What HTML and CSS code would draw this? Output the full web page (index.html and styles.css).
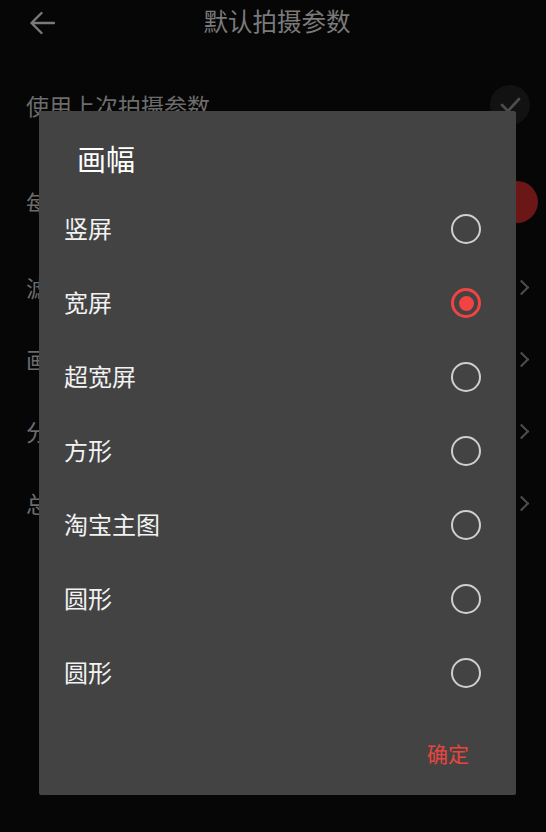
FILE: index.html
```html
<!DOCTYPE html>
<html lang="zh">
<head>
<meta charset="utf-8">
<title>默认拍摄参数</title>
<link rel="stylesheet" href="styles.css">
</head>
<body>
<div class="page">
  <header class="topbar">
    <svg class="back" width="26" height="24" viewBox="0 0 26 24"><path d="M25 12H2.5M12.5 2L2.5 12L12.5 22" fill="none" stroke="#7a7a7a" stroke-width="2.4" stroke-linecap="round" stroke-linejoin="round"/></svg>
    <h1 class="title">默认拍摄参数</h1>
  </header>
  <div class="settings">
    <div class="row r1"><span>使用上次拍摄参数</span>
      <span class="knob dark"><svg width="40" height="40" viewBox="0 0 40 40"><path d="M12 20l6 6 11-12" fill="none" stroke="#4c4c4c" stroke-width="2.6" stroke-linecap="round" stroke-linejoin="round"/></svg></span></div>
    <div class="row r2"><span>每</span><span class="knob red"></span></div>
    <div class="row r3"><span>滤</span><span class="chev"></span></div>
    <div class="row"><span>画</span><span class="chev"></span></div>
    <div class="row"><span>分</span><span class="chev"></span></div>
    <div class="row"><span>总</span><span class="chev"></span></div>
  </div>
</div>

<div class="dialog">
  <h2 class="dlg-title">画幅</h2>
  <ul class="options">
    <li class="option"><span class="label">竖屏</span><span class="radio"></span></li>
    <li class="option"><span class="label">宽屏</span><span class="radio on"></span></li>
    <li class="option"><span class="label">超宽屏</span><span class="radio"></span></li>
    <li class="option"><span class="label">方形</span><span class="radio"></span></li>
    <li class="option"><span class="label">淘宝主图</span><span class="radio"></span></li>
    <li class="option"><span class="label">圆形</span><span class="radio"></span></li>
    <li class="option"><span class="label">圆形</span><span class="radio"></span></li>
  </ul>
  <div class="actions"><span class="ok">确定</span></div>
</div>
</body>
</html>
```
FILE: styles.css
```css
html, body {
  margin: 0;
  padding: 0;
  background: #060606;
  width: 546px;
  height: 832px;
  overflow: hidden;
  font-family: "Noto Sans CJK SC", "Noto Sans", sans-serif;
}
.page {
  position: relative;
  height: 832px;
}
.topbar {
  height: 44px;
  display: flex;
  align-items: center;
  justify-content: center;
  padding-left: 8px;
  position: relative;
}
.back {
  position: absolute;
  left: 29px;
  top: 11px;
}
.title {
  margin: 0 0 2px 0;
  font-size: 24.5px;
  font-weight: 400;
  color: #7a7a7a;
  line-height: 40px;
}
.settings {
  padding-top: 25px;
}
.row {
  height: 72px;
  display: flex;
  align-items: center;
  justify-content: space-between;
  padding: 0 17px 0 26px;
  font-size: 23px;
  color: #6c6c6c;
}
.r2 { margin-top: 25px; padding-right: 8px; }
.r3 { margin-top: 13px; }
.r1 { padding-right: 16px; }
.knob {
  width: 40px;
  height: 40px;
  border-radius: 50%;
  display: block;
}
.knob.dark { background: #121212; }
.knob.red { background: #6b1717; width: 42px; height: 42px; }
.chev {
  width: 9px;
  height: 9px;
  border-top: 2px solid #4e4e4e;
  border-right: 2px solid #4e4e4e;
  transform: rotate(45deg);
  margin-right: 2px;
}

.dialog {
  position: absolute;
  left: 39px;
  top: 111px;
  width: 477px;
  height: 684px;
  box-sizing: border-box;
  background: #434343;
  border-radius: 2px;
  padding: 27px 35px 22px 25px;
  display: flex;
  flex-direction: column;
}
.dlg-title {
  margin: 0 0 14px 13px;
  font-size: 29px;
  font-weight: 400;
  line-height: 40px;
  color: #ffffff;
}
.options {
  list-style: none;
  margin: 0;
  padding: 0;
}
.option {
  height: 74px;
  display: flex;
  align-items: center;
  justify-content: space-between;
  font-size: 24px;
  color: #f2f2f2;
}
.label {
  margin-bottom: 3px;
}
.radio {
  width: 30px;
  height: 30px;
  box-sizing: border-box;
  border: 2.5px solid #cfcfcf;
  border-radius: 50%;
  display: flex;
  align-items: center;
  justify-content: center;
}
.radio.on {
  border: 3px solid #f24343;
}
.radio.on::after {
  content: "";
  width: 15px;
  height: 15px;
  border-radius: 50%;
  background: #f24343;
}
.actions {
  margin-top: 23px;
  display: flex;
  justify-content: flex-end;
  padding-right: 12px;
}
.ok {
  font-size: 21px;
  line-height: 40px;
  color: #e8453f;
}
```
